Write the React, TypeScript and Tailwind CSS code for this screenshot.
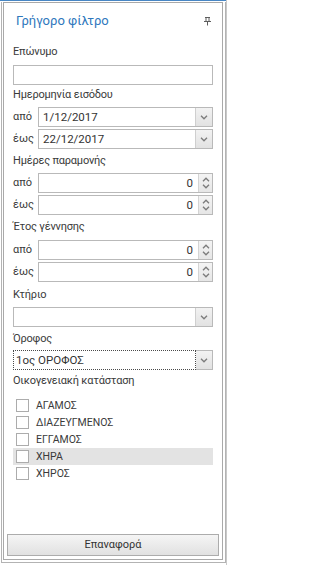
import React from 'react';

const font = { fontFamily: 'Roboto, "Noto Sans", sans-serif' };

function Chevron({ up = false }: { up?: boolean }) {
  return (
    <svg width="8" height="5" viewBox="0 0 8 5" className="block">
      <path d={up ? 'M1 4.2 4 1.2 7 4.2' : 'M1 0.8 4 3.8 7 0.8'} fill="none" stroke="#7b7b7b" strokeWidth="1.3" />
    </svg>
  );
}

function Label({ text, className = '' }: { text: string; className?: string }) {
  return <div className={`h-[16px] leading-[16px] text-[11px] tracking-[-0.2px] text-[#3a3a3a] ${className}`}>{text}</div>;
}

function DropButton() {
  return (
    <div className="w-[17px] h-full flex items-center justify-center border-l border-[#cfcfcf] bg-gradient-to-b from-[#f2f2f2] to-[#e2e2e2]">
      <Chevron />
    </div>
  );
}

function DateEdit({ value }: { value: string }) {
  return (
    <div className="flex-1 h-[20px] flex border border-[#b9b9b9] bg-white">
      <div className="flex-1 pl-[4px] leading-[18px] text-[11.5px] text-[#333]">{value}</div>
      <DropButton />
    </div>
  );
}

function SpinEdit({ value }: { value: string }) {
  return (
    <div className="flex-1 h-[20px] flex border border-[#b9b9b9] bg-white">
      <div className="flex-1 pr-[5px] text-right leading-[18px] text-[11.5px] text-[#333]">{value}</div>
      <div className="w-[14px] h-full flex flex-col items-center justify-center gap-[2px] border-l border-[#d4d4d4] bg-gradient-to-b from-[#f4f4f4] to-[#e6e6e6]">
        <Chevron up />
        <Chevron />
      </div>
    </div>
  );
}

function Row({ label, children, className = '' }: { label: string; children: React.ReactNode; className?: string }) {
  return (
    <div className={`flex items-center h-[20px] ${className}`}>
      <div className="w-[25px] text-[11px] text-[#3a3a3a]">{label}</div>
      {children}
    </div>
  );
}

function CheckRow({ text, hot = false }: { text: string; hot?: boolean }) {
  return (
    <div className={`h-[17px] flex items-center pl-[3px] ${hot ? 'bg-[#e3e3e3]' : ''}`}>
      <div className="w-[13px] h-[13px] border border-[#acacac] bg-white" />
      <div className="ml-[7px] text-[10.5px] text-[#3a3a3a] leading-[17px]">{text}</div>
    </div>
  );
}

export default function App() {
  return (
    <div className="w-[227px] h-[565px] bg-white flex flex-col border-r border-[#c9c9c9]" style={font}>
      <div className="h-[1px] bg-[#4786c4]" />
      <div className="flex-1 flex pt-[1px]">
        <div className="ml-[1px] w-[225px] h-[561px] flex border-l border-r border-b border-[#b3b3b3] pl-[1px] pr-[2px] pb-[2px]">
          <div className="w-[220px] flex flex-col border border-[#a9a9a9]">
            {/* Header */}
            <div className="h-[36px] flex items-center justify-between pl-[12px] pr-[10px]">
              <span className="text-[13px] text-[#2f78bd]">Γρήγορο φίλτρο</span>
              <svg width="9" height="10" viewBox="0 0 9 10">
                <path d="M2 1.5h5M3 1.5v3.5M6 1.5v3.5M1 5.5h7M4.5 5.5v4" fill="none" stroke="#5d5d5d" strokeWidth="1" />
              </svg>
            </div>

            {/* Fields */}
            <div className="flex-1 flex flex-col px-[9px]">
              <Label text="Επώνυμο" className="mt-[5px]" />
              <div className="mt-[5px] h-[20px] border border-[#b9b9b9] bg-white" />

              <Label text="Ημερομηνία εισόδου" className="mt-[2px]" />
              <Row label="από" className="mt-[4px]"><DateEdit value="1/12/2017" /></Row>
              <Row label="έως" className="mt-[2px]"><DateEdit value="22/12/2017" /></Row>

              <Label text="Ημέρες παραμονής" className="mt-[4px]" />
              <Row label="από" className="mt-[4px]"><SpinEdit value="0" /></Row>
              <Row label="έως" className="mt-[2px]"><SpinEdit value="0" /></Row>

              <Label text="Έτος γέννησης" className="mt-[4px]" />
              <Row label="από" className="mt-[5px]"><SpinEdit value="0" /></Row>
              <Row label="έως" className="mt-[2px]"><SpinEdit value="0" /></Row>

              <Label text="Κτήριο" className="mt-[5px]" />
              <div className="mt-[4px] h-[20px] flex border border-[#b9b9b9] bg-white">
                <div className="flex-1" />
                <DropButton />
              </div>

              <Label text="Όροφος" className="mt-[4px]" />
              <div className="mt-[3px] h-[20px] flex bg-white">
                <div className="flex-1 border border-dotted border-[#4a4a4a] pl-[2px] leading-[18px] text-[11.5px] text-[#333]">1ος ΟΡΟΦΟΣ</div>
                <div className="w-[17px] h-full flex items-center justify-center border border-l-0 border-[#b9b9b9] bg-gradient-to-b from-[#f2f2f2] to-[#e2e2e2]">
                  <Chevron />
                </div>
              </div>

              <Label text="Οικογενειακή κατάσταση" className="mt-[3px]" />
              <div className="mt-[8px] flex flex-col">
                <CheckRow text="ΑΓΑΜΟΣ" />
                <CheckRow text="ΔΙΑΖΕΥΓΜΕΝΟΣ" />
                <CheckRow text="ΕΓΓΑΜΟΣ" />
                <CheckRow text="ΧΗΡΑ" hot />
                <CheckRow text="ΧΗΡΟΣ" />
              </div>
            </div>

            {/* Reset */}
            <div className="mx-[3px] mb-[3px] h-[22px] flex items-center justify-center border border-[#acacac] bg-gradient-to-b from-[#f5f5f5] to-[#e1e1e1] text-[11px] text-[#333]">
              Επαναφορά
            </div>
          </div>
        </div>
      </div>
    </div>
  );
}
